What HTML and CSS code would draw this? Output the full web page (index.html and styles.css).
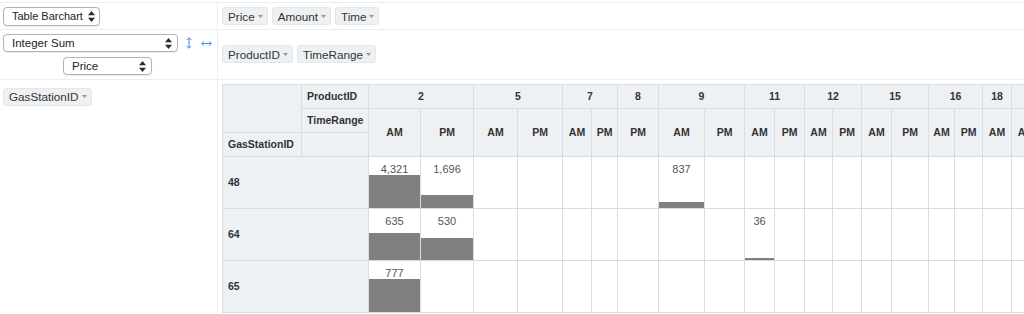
FILE: index.html
```html
<!DOCTYPE html>
<html>
<head>
<meta charset="utf-8">
<link rel="stylesheet" href="styles.css">
</head>
<body>
<div class="ui">
  <div class="cell left r1">
    <div class="sel w-renderer"><span>Table Barchart</span><svg class="ud" width="7" height="11" viewBox="0 0 7 11"><polygon points="0,4.2 3.5,0 7,4.2"/><polygon points="0,6.8 3.5,11 7,6.8"/></svg></div>
  </div>
  <div class="cell right r1">
    <span class="pill">Price<svg class="tri" width="5" height="3" viewBox="0 0 5 3"><polygon points="0,0 5,0 2.5,3"/></svg></span>
    <span class="pill">Amount<svg class="tri" width="5" height="3" viewBox="0 0 5 3"><polygon points="0,0 5,0 2.5,3"/></svg></span>
    <span class="pill">Time<svg class="tri" width="5" height="3" viewBox="0 0 5 3"><polygon points="0,0 5,0 2.5,3"/></svg></span>
  </div>
  <div class="cell left r2 vals">
    <div class="valsline">
      <div class="sel w-agg"><span>Integer Sum</span><svg class="ud" width="7" height="11" viewBox="0 0 7 11"><polygon points="0,4.2 3.5,0 7,4.2"/><polygon points="0,6.8 3.5,11 7,6.8"/></svg></div>
      <svg class="ord-v" width="6" height="12" viewBox="0 0 6 12"><path d="M3 0.8 V11.2 M0.8 3 L3 0.8 L5.2 3 M0.8 9 L3 11.2 L5.2 9"/></svg>
      <svg class="ord-h" width="11" height="7" viewBox="0 0 11 7"><path d="M0.8 3.5 H10.2 M3 1.3 L0.8 3.5 L3 5.7 M8 1.3 L10.2 3.5 L8 5.7"/></svg>
    </div>
    <div class="sel w-attr"><span>Price</span><svg class="ud" width="7" height="11" viewBox="0 0 7 11"><polygon points="0,4.2 3.5,0 7,4.2"/><polygon points="0,6.8 3.5,11 7,6.8"/></svg></div>
  </div>
  <div class="cell right r2">
    <span class="pill">ProductID<svg class="tri" width="5" height="3" viewBox="0 0 5 3"><polygon points="0,0 5,0 2.5,3"/></svg></span>
    <span class="pill">TimeRange<svg class="tri" width="5" height="3" viewBox="0 0 5 3"><polygon points="0,0 5,0 2.5,3"/></svg></span>
  </div>
  <div class="cell left r3">
    <span class="pill">GasStationID<svg class="tri" width="5" height="3" viewBox="0 0 5 3"><polygon points="0,0 5,0 2.5,3"/></svg></span>
  </div>
  <div class="cell right r3 output">
    <table class="pvt">
      <colgroup>
        <col><col><col><col><col><col><col><col><col><col><col>
        <col><col><col><col><col><col><col><col><col><col><col>
      </colgroup>
      <thead>
        <tr>
          <th rowspan="2"></th>
          <th>ProductID</th>
          <th class="cl" colspan="2">2</th>
          <th class="cl" colspan="2">5</th>
          <th class="cl" colspan="2">7</th>
          <th class="cl">8</th>
          <th class="cl" colspan="2">9</th>
          <th class="cl" colspan="2">11</th>
          <th class="cl" colspan="2">12</th>
          <th class="cl" colspan="2">15</th>
          <th class="cl" colspan="2">16</th>
          <th class="cl">18</th>
          <th class="cl" colspan="2">19</th>
        </tr>
        <tr>
          <th>TimeRange</th>
          <th class="cl" rowspan="2">AM</th><th class="cl" rowspan="2">PM</th>
          <th class="cl" rowspan="2">AM</th><th class="cl" rowspan="2">PM</th>
          <th class="cl" rowspan="2">AM</th><th class="cl" rowspan="2">PM</th>
          <th class="cl" rowspan="2">PM</th>
          <th class="cl" rowspan="2">AM</th><th class="cl" rowspan="2">PM</th>
          <th class="cl" rowspan="2">AM</th><th class="cl" rowspan="2">PM</th>
          <th class="cl" rowspan="2">AM</th><th class="cl" rowspan="2">PM</th>
          <th class="cl" rowspan="2">AM</th><th class="cl" rowspan="2">PM</th>
          <th class="cl" rowspan="2">AM</th><th class="cl" rowspan="2">PM</th>
          <th class="cl" rowspan="2">AM</th>
          <th class="cl" rowspan="2">AM</th><th class="cl" rowspan="2">PM</th>
        </tr>
        <tr>
          <th>GasStationID</th>
          <th></th>
        </tr>
      </thead>
      <tbody>
        <tr>
          <th colspan="2">48</th>
          <td><div class="wrap"><div class="bar" style="height:33px"></div><div class="val">4,321</div></div></td>
          <td><div class="wrap"><div class="bar" style="height:13px"></div><div class="val">1,696</div></div></td>
          <td></td><td></td><td></td><td></td><td></td>
          <td><div class="wrap"><div class="bar" style="height:6px"></div><div class="val">837</div></div></td>
          <td></td><td></td><td></td><td></td><td></td><td></td><td></td><td></td><td></td><td></td><td></td><td></td>
        </tr>
        <tr>
          <th colspan="2">64</th>
          <td><div class="wrap"><div class="bar" style="height:27px"></div><div class="val">635</div></div></td>
          <td><div class="wrap"><div class="bar" style="height:22px"></div><div class="val">530</div></div></td>
          <td></td><td></td><td></td><td></td><td></td><td></td><td></td>
          <td><div class="wrap"><div class="bar" style="height:2px"></div><div class="val">36</div></div></td>
          <td></td><td></td><td></td><td></td><td></td><td></td><td></td><td></td><td></td><td></td>
        </tr>
        <tr>
          <th colspan="2">65</th>
          <td><div class="wrap"><div class="bar" style="height:33px"></div><div class="val">777</div></div></td>
          <td></td><td></td><td></td><td></td><td></td><td></td><td></td><td></td><td></td>
          <td></td><td></td><td></td><td></td><td></td><td></td><td></td><td></td><td></td><td></td>
        </tr>
      </tbody>
    </table>
  </div>
</div>
</body>
</html>
```

FILE: styles.css
```css
html, body {
  margin: 0;
  padding: 0;
  overflow: hidden;
  background: #fff;
}

body {
  width: 1024px;
  height: 314px;
  font-family: "Liberation Sans", Arial, sans-serif;
  color: #333;
}

.ui {
  display: grid;
  grid-template-columns: 218px minmax(0, 1fr);
  grid-template-rows: 27px 50px auto;
  margin-top: 2px;
  border-top: 1px solid #eceff1;
}

.cell {
  box-sizing: border-box;
  border-bottom: 1px solid #eceff1;
}

.left {
  border-right: 1px solid #eceff1;
}

.r1.left {
  display: flex;
  align-items: center;
  padding: 0 0 0 3px;
}

.r1.right,
.r2.right {
  display: flex;
  align-items: center;
  gap: 4px;
  padding-left: 4px;
}

.r2.right {
  padding-bottom: 1px;
}

.vals {
  display: flex;
  flex-direction: column;
  align-items: center;
  gap: 5px;
  padding: 4px 2px 0 0;
}

.valsline {
  display: flex;
  align-items: center;
}

.r3 {
  border-bottom: none;
}

.r3.left {
  padding: 7px 0 0 3px;
}

.output {
  padding: 4px 0 0 4px;
  overflow: visible;
}

/* selects */
.sel {
  box-sizing: border-box;
  display: flex;
  align-items: center;
  justify-content: space-between;
  height: 19px;
  padding: 0 5px 0 8px;
  background: #fff;
  border: 1px solid #b4b4b4;
  border-radius: 4px;
  font-size: 11.5px;
  color: #222;
  white-space: nowrap;
  box-shadow: 0 0.5px 1px rgba(0, 0, 0, 0.08);
}

.sel .ud {
  flex: none;
  fill: #2b2b2b;
}

.w-renderer { width: 97px; padding-right: 4px; font-size: 11px; }
.w-agg { width: 175px; height: 18px; }
.w-attr { width: 89px; height: 18px; }

.ord-v {
  margin-left: 8px;
  fill: none;
  stroke: #3d8fe6;
  stroke-width: 1;
}

.ord-h {
  margin-left: 9px;
  fill: none;
  stroke: #3d8fe6;
  stroke-width: 1;
}

/* attribute pills */
.pill {
  box-sizing: border-box;
  display: inline-flex;
  align-items: center;
  gap: 3px;
  height: 18px;
  padding: 0 4px 0 5px;
  background: #eef1f3;
  border: 1px solid #e3e7ea;
  border-radius: 3px;
  font-size: 11.7px;
  color: #333;
  white-space: nowrap;
}

.pill .tri {
  fill: #8c9aa5;
}

/* pivot table */
table.pvt {
  border-collapse: collapse;
  table-layout: fixed;
  width: 848px;
  font-size: 11px;
}

.pvt col:nth-child(1) { width: 79px; }
.pvt col:nth-child(2) { width: 67px; }
.pvt col:nth-child(3) { width: 52px; }
.pvt col:nth-child(4) { width: 53px; }
.pvt col:nth-child(5) { width: 44px; }
.pvt col:nth-child(6) { width: 45px; }
.pvt col:nth-child(7) { width: 29px; }
.pvt col:nth-child(8) { width: 26px; }
.pvt col:nth-child(9) { width: 41px; }
.pvt col:nth-child(10) { width: 46px; }
.pvt col:nth-child(11) { width: 40px; }
.pvt col:nth-child(12) { width: 30px; }
.pvt col:nth-child(13) { width: 30px; }
.pvt col:nth-child(14) { width: 28px; }
.pvt col:nth-child(15) { width: 29px; }
.pvt col:nth-child(16) { width: 30px; }
.pvt col:nth-child(17) { width: 37px; }
.pvt col:nth-child(18) { width: 26px; }
.pvt col:nth-child(19) { width: 28px; }
.pvt col:nth-child(20) { width: 29px; }
.pvt col:nth-child(21) { width: 29px; }
.pvt col:nth-child(22) { width: 30px; }

.pvt th {
  background: #eef1f4;
  border: 1px solid #d6dee3;
  padding: 5px;
  font-size: 10.5px;
  font-weight: bold;
  color: #333;
  text-align: left;
  line-height: 13px;
  white-space: nowrap;
  overflow: hidden;
}

.pvt th.cl {
  text-align: center;
  padding: 5px 0;
}

.pvt td {
  padding: 5px 0 0;
  border: 1px solid #d6dee3;
  background: #fff;
  vertical-align: top;
  text-align: center;
  color: #555;
}

.wrap {
  position: relative;
  height: 46px;
}

.bar {
  position: absolute;
  left: 0;
  right: 0;
  bottom: 0;
  background: #808080;
}

.val {
  position: relative;
  padding: 0 5px;
  line-height: 14px;
}
```
